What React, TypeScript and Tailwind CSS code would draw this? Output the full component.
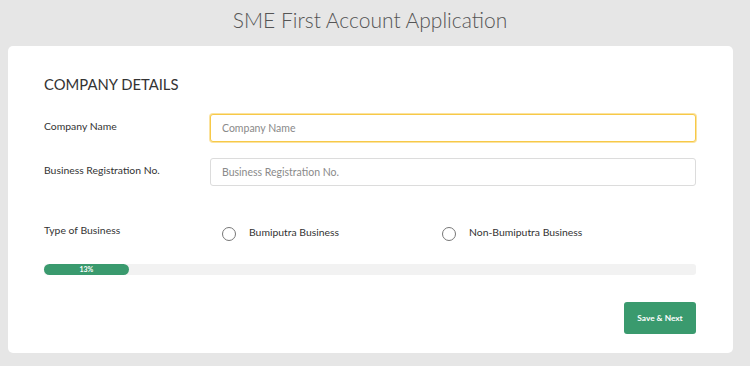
const fields = [
  { label: "Company Name", placeholder: "Company Name", focused: true },
  {
    label: "Business Registration No.",
    placeholder: "Business Registration No.",
    focused: false,
  },
];

const businessTypes = ["Bumiputra Business", "Non-Bumiputra Business"];

const App = () => {
  const progress = 13;

  return (
    <div className="flex h-[366px] w-full flex-col bg-[#e6e6e6] font-['Lato','Noto_Sans',sans-serif] text-[#333]">
      <div className="flex h-[46px] items-center justify-center pb-[6px] pr-[10px] text-[21px] font-light text-[#555]">
        SME First Account Application
      </div>
      <div className="ml-2 flex w-[725px] flex-col rounded-[5px] bg-white pb-[19px] pl-9 pr-[37px] pt-[28px]">
        <h2 className="h-5 text-[14.8px] leading-5 text-[#333]">
          COMPANY DETAILS
        </h2>
        <div className="mt-5 flex flex-col gap-4">
          {fields.map((field) => (
            <div key={field.label} className="flex h-7 items-center">
              <label className="w-[166px] pb-[2px] text-[10.4px] text-[#333]">
                {field.label}
              </label>
              <input
                type="text"
                placeholder={field.placeholder}
                className={`h-7 flex-1 rounded-[3px] border bg-white px-[11px] text-[10.5px] outline-none placeholder:text-[#8a8a8a] ${
                  field.focused
                    ? "border-[#f7c948] shadow-[0_0_0_1px_#fbe3a0]"
                    : "border-[#dcdcdc]"
                }`}
              />
            </div>
          ))}
        </div>
        <div className="mt-[33px] flex h-7 items-center">
          <span className="w-[166px] pb-[4px] text-[10.4px] text-[#333]">
            Type of Business
          </span>
          {businessTypes.map((type) => (
            <label key={type} className="flex w-[220px] items-center pl-3">
              <span className="mt-[2px] h-[14px] w-[14px] rounded-full border-[1.5px] border-[#777]" />
              <span className="ml-[13px] text-[10.4px] text-[#333]">
                {type}
              </span>
            </label>
          ))}
        </div>
        <div className="mt-[17px] h-[11px] w-full rounded-[3px] bg-[#f2f2f2]">
          <div
            className="flex h-full items-center justify-center rounded-full bg-[#3a9a6e] text-[7px] font-bold text-white"
            style={{ width: `${progress}%` }}
          >
            {progress}%
          </div>
        </div>
        <div className="mt-[27px] flex justify-end">
          <button className="h-8 w-[72px] rounded-[3px] bg-[#3a9a6e] text-[8.3px] font-bold text-white">
            Save &amp; Next
          </button>
        </div>
      </div>
    </div>
  );
};

export default App;
